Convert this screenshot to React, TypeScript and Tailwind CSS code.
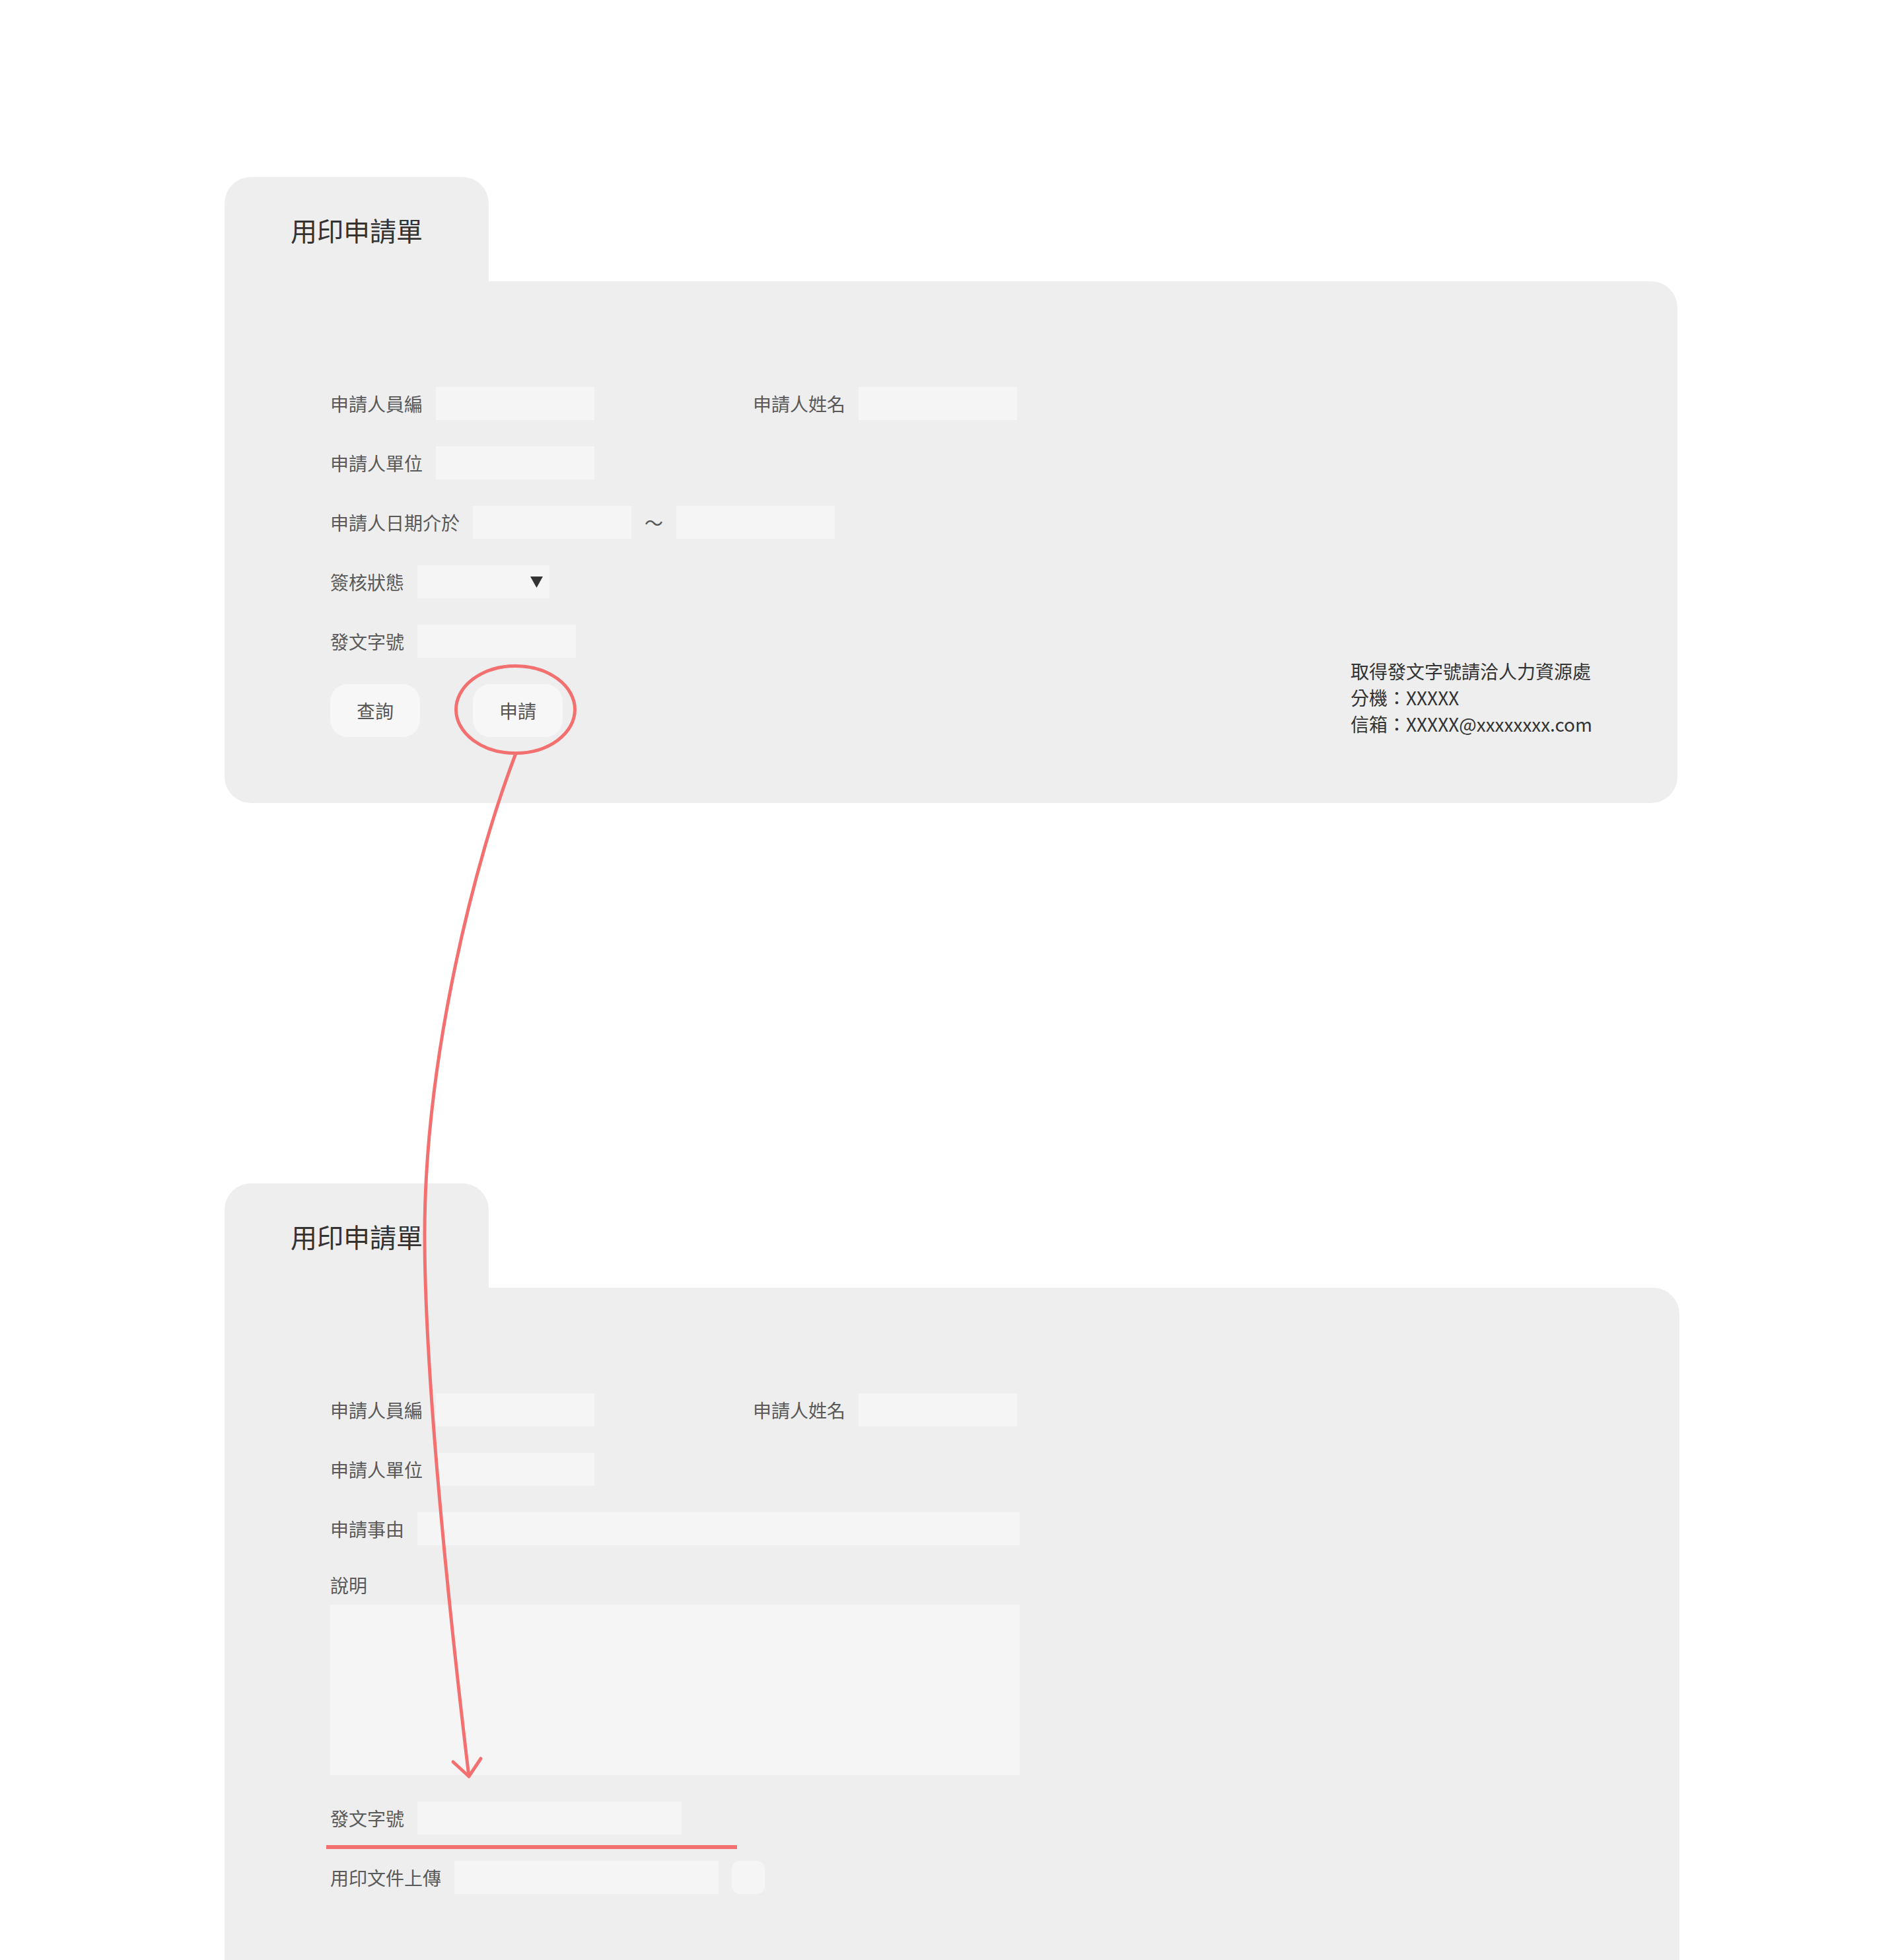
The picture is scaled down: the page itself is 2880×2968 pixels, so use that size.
import React from "react";

const LABEL = "text-[28px] leading-[50px] text-[#595959] whitespace-nowrap";

// Single input field with label on the left
function Field({ label, width }: { label: string; width: string }) {
    return (
        <div className="flex items-center h-[50px] gap-[20px]">
            <span className={LABEL}>{label}</span>
            <input type="text" className={`h-[50px] ${width} bg-[#f5f5f5] outline-none`} />
        </div>
    );
}

function Tab() {
    return (
        <div className="w-[400px] h-[158px] rounded-t-[40px] bg-[#eeeeee] pl-[100px] pt-[60px]">
            <h1 className="text-[40px] leading-[40px] text-[#333333] whitespace-nowrap">用印申請單</h1>
        </div>
    );
}

function SearchPanel() {
    return (
        <div className="flex flex-col">
            <Tab />
            <div className="w-[2200px] flex items-end rounded-tr-[40px] rounded-b-[40px] bg-[#eeeeee] pt-[160px] pb-[100px] pl-[160px]">
                <div className="flex-1 flex flex-col gap-[40px]">
                    {/* Row 1 */}
                    <div className="flex">
                        <div className="w-[640px]">
                            <Field label="申請人員編" width="w-[240px]" />
                        </div>
                        <Field label="申請人姓名" width="w-[240px]" />
                    </div>
                    <Field label="申請人單位" width="w-[240px]" />

                    {/* Date range */}
                    <div className="flex items-center h-[50px]">
                        <span className={LABEL}>申請人日期介於</span>
                        <input type="text" className="ml-[20px] h-[50px] w-[240px] bg-[#f5f5f5] outline-none" />
                        <span className="mx-[20px] w-[28px] text-center text-[28px] leading-[50px] text-[#555555]">～</span>
                        <input type="text" className="h-[50px] w-[240px] bg-[#f5f5f5] outline-none" />
                    </div>

                    {/* Status select */}
                    <div className="flex items-center h-[50px] gap-[20px]">
                        <span className={LABEL}>簽核狀態</span>
                        <div className="h-[50px] w-[200px] bg-[#f5f5f5] flex items-center justify-end pr-[10px]">
                            <svg width="19" height="17" viewBox="0 0 19 17">
                                <polygon points="0,0 19,0 9.5,17" fill="#333333" />
                            </svg>
                        </div>
                    </div>

                    <Field label="發文字號" width="w-[240px]" />

                    {/* Buttons */}
                    <div className="flex gap-[80px] h-[80px]">
                        <button className="w-[136px] h-[80px] rounded-[26px] bg-[#f7f7f7] text-[28px] text-[#555555]">查詢</button>
                        <button className="w-[136px] h-[80px] rounded-[26px] bg-[#f7f7f7] text-[28px] text-[#555555]">申請</button>
                    </div>
                </div>

                <div className="w-[495px] text-[28px] leading-[40px] text-[#333333] whitespace-nowrap">
                    <p>取得發文字號請洽人力資源處</p>
                    <p>分機：XXXXX</p>
                    <p>信箱：XXXXX@xxxxxxxx.com</p>
                </div>
            </div>
        </div>
    );
}

function ApplyPanel() {
    return (
        <div className="flex flex-col mt-[576px]">
            <Tab />
            <div className="w-[2203px] h-[1100px] rounded-tr-[40px] rounded-b-[40px] bg-[#eeeeee] pt-[160px] pl-[160px] flex flex-col">
                <div className="flex">
                    <div className="w-[640px]">
                        <Field label="申請人員編" width="w-[240px]" />
                    </div>
                    <Field label="申請人姓名" width="w-[240px]" />
                </div>
                <div className="mt-[40px]">
                    <Field label="申請人單位" width="w-[240px]" />
                </div>
                <div className="mt-[40px]">
                    <Field label="申請事由" width="w-[912px]" />
                </div>

                {/* Description */}
                <span className="mt-[40px] text-[28px] leading-[40px] text-[#595959]">說明</span>
                <textarea className="mt-[10px] w-[1044px] h-[258px] bg-[#f5f5f5] resize-none outline-none" />

                <div className="mt-[40px]">
                    <Field label="發文字號" width="w-[400px]" />
                </div>

                {/* Upload */}
                <div className="mt-[40px] flex items-center h-[50px]">
                    <span className={LABEL}>用印文件上傳</span>
                    <input type="text" className="ml-[20px] h-[50px] w-[400px] bg-[#f5f5f5] outline-none" />
                    <button className="ml-[20px] w-[50px] h-[50px] rounded-[12px] bg-[#f5f5f5]" />
                </div>
            </div>
        </div>
    );
}

// Red annotation: circle around the apply button, arrow down to the form
function Annotation() {
    const red = "#f37070";
    return (
        <svg
            className="absolute left-0 top-0 pointer-events-none"
            width="2880"
            height="2968"
            viewBox="0 0 2880 2968"
            fill="none"
        >
            <ellipse cx="780.5" cy="1074.5" rx="90" ry="66" stroke={red} strokeWidth="5" />
            <path
                d="M781 1141 C720 1300, 643 1600, 643 1870 C643 2100, 686 2490, 710 2690"
                stroke={red}
                strokeWidth="5"
                strokeLinecap="round"
            />
            <polyline
                points="686,2668 710,2690 728,2663"
                stroke={red}
                strokeWidth="5"
                strokeLinecap="round"
                strokeLinejoin="round"
            />
            <rect x="494" y="2794" width="622" height="6" fill={red} />
        </svg>
    );
}

export default function App() {
    return (
        <div className="relative w-[2880px] h-[2968px] overflow-hidden bg-white pt-[268px] pl-[340px] font-['Noto_Sans_CJK_TC','Noto_Sans_CJK_SC',sans-serif]">
            <SearchPanel />
            <ApplyPanel />
            <Annotation />
        </div>
    );
}
